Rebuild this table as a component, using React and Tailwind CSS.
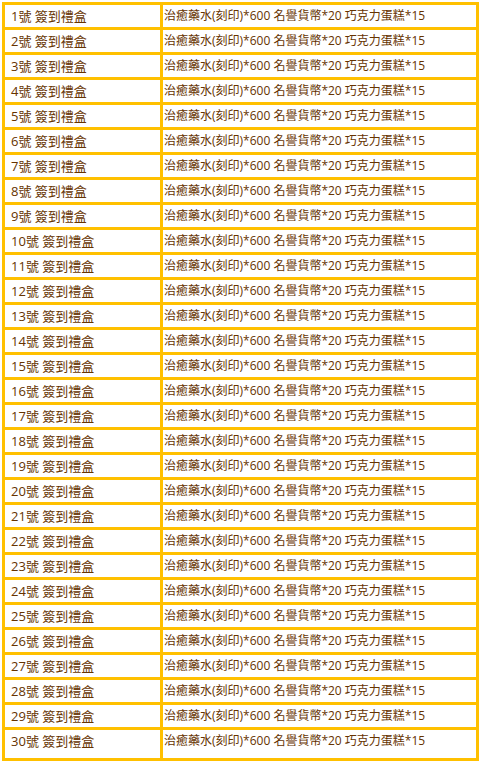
const rows = Array.from({ length: 30 }, (_, i) => i + 1);

export default function App() {
  return (
    <div className="bg-white w-[481px] h-[766px] pt-[2px] px-[2px]">
      <div
        className="grid grid-cols-[155px_1fr] gap-[3px] bg-[#ffc000] p-[3px] text-[#663300]"
        style={{ fontFamily: '"Open Sans", "Noto Sans CJK TC", sans-serif' }}
      >
        {rows.map((n) => {
          const last = n === rows.length;
          return [
            <div
              key={`a${n}`}
              className={`bg-white pl-[6px] text-[13px] leading-[22px] whitespace-nowrap ${last ? "h-[28px]" : "h-[22px]"}`}
            >
              {n}號 簽到禮盒
            </div>,
            <div
              key={`b${n}`}
              className={`bg-white pl-[1px] text-[12px] leading-[22px] whitespace-nowrap ${last ? "h-[28px]" : "h-[22px]"}`}
            >
              治癒藥水(刻印)*600 名譽貨幣*20 巧克力蛋糕*15
            </div>,
          ];
        })}
      </div>
    </div>
  );
}
